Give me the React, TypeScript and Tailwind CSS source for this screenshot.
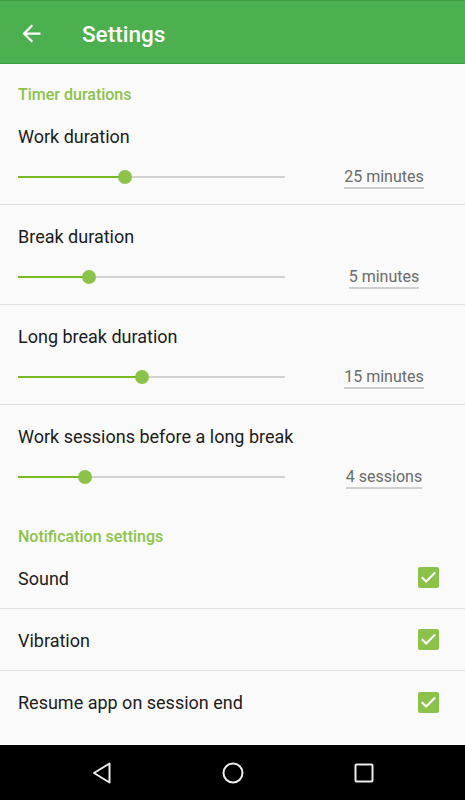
import React from "react";

const font = { fontFamily: "Roboto, 'Noto Sans', sans-serif" };

function SliderRow({
  label,
  value,
  thumb,
  divider,
}: {
  label: string;
  value: string;
  thumb: number;
  divider: boolean;
}) {
  return (
    <div className={`h-[100px] flex flex-col ${divider ? "border-b border-[#e0e0e0]" : ""}`}>
      <div className="pl-[18px] pt-[20px] text-[18px] leading-[24px] text-[#1c1c1c]">{label}</div>
      <div className="flex items-center h-[30px] mt-[13px]">
        <div className="ml-[18px] w-[267px] h-[14px] relative shrink-0">
          <div className="absolute left-0 right-0 top-[6px] h-[2px] bg-[#d2d2d2]" />
          <div
            className="absolute left-0 top-[6px] h-[2px] bg-[#76bc21]"
            style={{ width: thumb }}
          />
          <div
            className="absolute top-0 w-[14px] h-[14px] rounded-full bg-[#8bc34a]"
            style={{ left: thumb - 7 }}
          />
        </div>
        <div className="flex-1 pl-[18px] flex justify-center">
          <span className="inline-block text-[16px] leading-[20px] text-[#6b6b6b] border-b-2 border-[#cfcfcf] mt-[1px]">
            {value}
          </span>
        </div>
      </div>
    </div>
  );
}

function CheckRow({ label, divider }: { label: string; divider: boolean }) {
  return (
    <div
      className={`h-[62px] flex items-center justify-between pl-[18px] pr-[26px] ${
        divider ? "border-b border-[#e0e0e0]" : ""
      }`}
    >
      <span className="text-[18px] leading-[24px] text-[#1c1c1c] mt-[2px]">{label}</span>
      <div className="w-[21px] h-[21px] rounded-[2px] bg-[#8bc34a] flex items-center justify-center">
        <svg width="19" height="19" viewBox="0 0 24 24">
          <path
            d="M4.5 12.5l4.5 4.5L19.5 6.5"
            fill="none"
            stroke="#ffffff"
            strokeWidth="2.6"
            strokeLinecap="square"
          />
        </svg>
      </div>
    </div>
  );
}

export default function App() {
  return (
    <div className="w-[465px] h-[800px] flex flex-col bg-[#fafafa] overflow-hidden" style={font}>
      <div className="h-[64px] shrink-0 bg-[#4caf50] border-t border-[#3f9a43] border-b border-b-[#3c9d40] flex items-center pt-[3px]">
        <div className="ml-[18px] w-[27px] h-[27px] flex items-center justify-center">
          <svg width="27" height="27" viewBox="0 0 24 24">
            <path
              d="M20 11H7.83l5.59-5.59L12 4l-8 8 8 8 1.41-1.41L7.83 13H20v-2z"
              fill="#ffffff"
            />
          </svg>
        </div>
        <span className="ml-[37px] text-[22.5px] font-medium text-white leading-[28px]">Settings</span>
      </div>
      <div className="flex-1 overflow-hidden">
        <div className="h-[41px] pl-[18px] pt-[21px] text-[16px] leading-[20px] font-medium text-[#8bc34a]">
          Timer durations
        </div>
        <SliderRow label="Work duration" value="25 minutes" thumb={107} divider />
        <SliderRow label="Break duration" value="5 minutes" thumb={71} divider />
        <SliderRow label="Long break duration" value="15 minutes" thumb={124} divider />
        <SliderRow label="Work sessions before a long break" value="4 sessions" thumb={67} divider={false} />
        <div className="h-[42px] pl-[18px] pt-[22px] text-[16px] leading-[20px] font-medium text-[#8bc34a]">
          Notification settings
        </div>
        <CheckRow label="Sound" divider />
        <CheckRow label="Vibration" divider />
        <CheckRow label="Resume app on session end" divider={false} />
      </div>
      <div className="h-[55px] shrink-0 bg-black flex items-center justify-center gap-[107px]">
        <svg width="24" height="24" viewBox="0 0 24 24">
          <path d="M19.5 2.5v19L4 12z" fill="none" stroke="#ececec" strokeWidth="2" strokeLinejoin="round" />
        </svg>
        <svg width="24" height="24" viewBox="0 0 24 24">
          <circle cx="12" cy="12" r="9.5" fill="none" stroke="#ececec" strokeWidth="2" />
        </svg>
        <svg width="24" height="24" viewBox="0 0 24 24">
          <rect x="3.5" y="3.5" width="17" height="17" fill="none" stroke="#ececec" strokeWidth="2" rx="1" />
        </svg>
      </div>
    </div>
  );
}
